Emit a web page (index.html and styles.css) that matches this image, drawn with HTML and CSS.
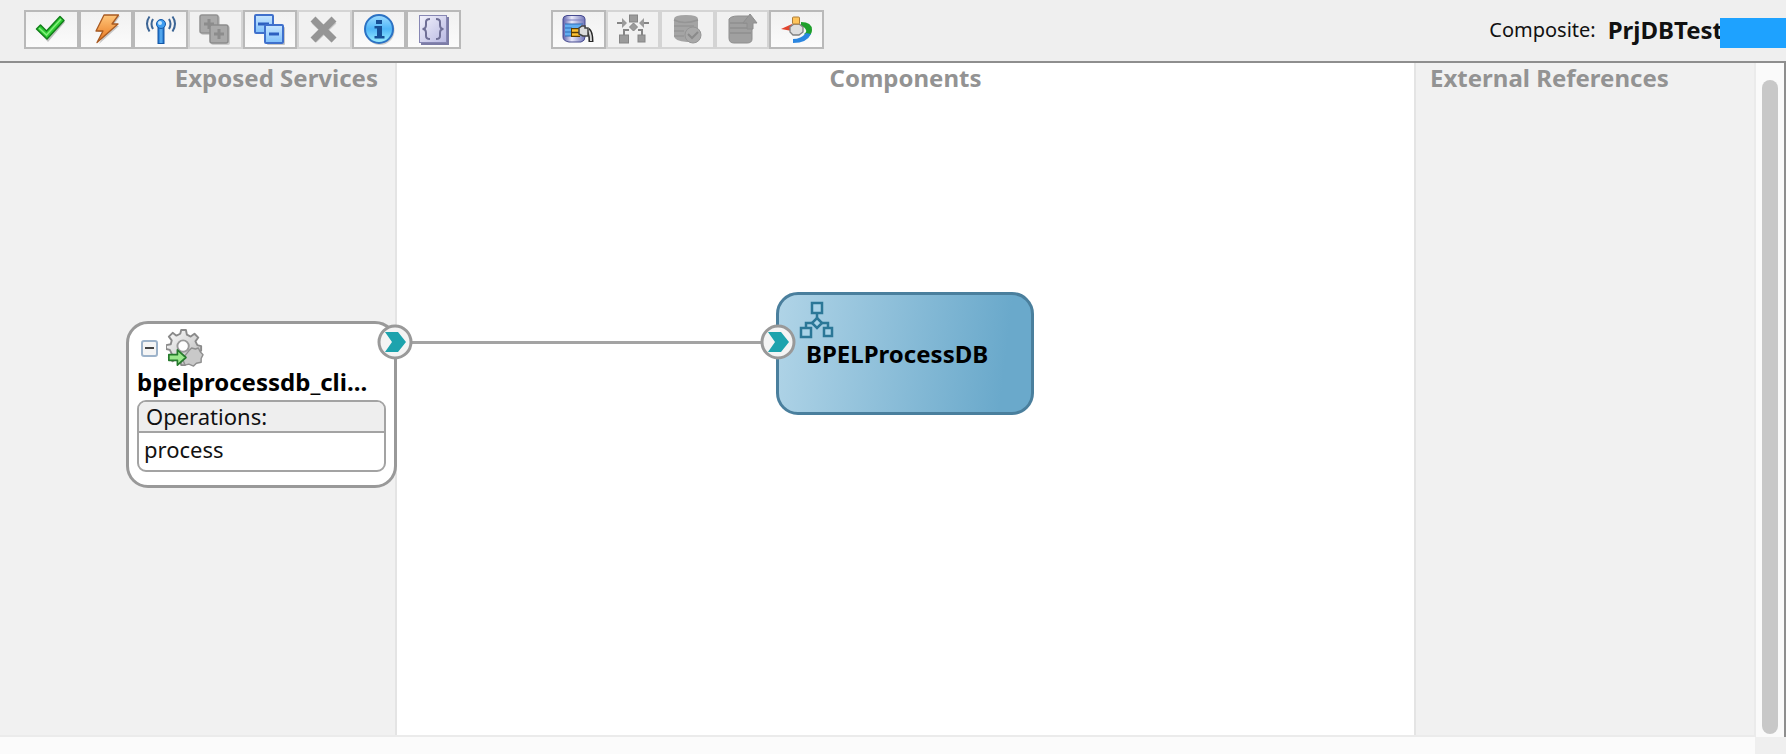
FILE: index.html
```
<!DOCTYPE html>
<html lang="en">

<head>
  <meta charset="utf-8" />
  <meta name="viewport" content="width=device-width, initial-scale=1" />
  <title>PrjDBTest</title>
  <link rel="stylesheet" href="styles.css">
</head>

<body>
  <!-- shared gradients -->
  <svg class="defs" width="0" height="0" aria-hidden="true">
    <defs>
      <linearGradient id="orange" x1="0" y1="0" x2="0" y2="1">
        <stop offset="0" stop-color="#ffc67a" /><stop offset="1" stop-color="#e8741c" />
      </linearGradient>
      <linearGradient id="blue" x1="0" y1="0" x2="0" y2="1">
        <stop offset="0" stop-color="#c8e6ff" /><stop offset="1" stop-color="#7fc0fb" />
      </linearGradient>
      <linearGradient id="pole" x1="0" y1="0" x2="1" y2="0">
        <stop offset="0" stop-color="#1668c4" /><stop offset=".5" stop-color="#5db2f5" /><stop offset="1" stop-color="#1263bd" />
      </linearGradient>
      <linearGradient id="violet" x1="0" y1="0" x2="1" y2="1">
        <stop offset="0" stop-color="#f2f2fc" /><stop offset="1" stop-color="#b9b9e2" />
      </linearGradient>
      <linearGradient id="barrel" x1="0" y1="0" x2="1" y2="0">
        <stop offset="0" stop-color="#5c5faa" /><stop offset=".4" stop-color="#e9e9fa" /><stop offset="1" stop-color="#7175b8" />
      </linearGradient>
      <linearGradient id="info" x1="0" y1="0" x2="0" y2="1">
        <stop offset="0" stop-color="#9edcff" /><stop offset=".5" stop-color="#4fb6f8" /><stop offset="1" stop-color="#9df0ff" />
      </linearGradient>
      <linearGradient id="metal" x1="0" y1="0" x2="1" y2="1">
        <stop offset="0" stop-color="#fdfdfd" /><stop offset="1" stop-color="#b5b5b5" />
      </linearGradient>
    </defs>
  </svg>

  <header class="toolbar">
    <div class="group group-main">
      <button type="button" aria-label="Validate">
        <svg viewBox="0 0 32 32">
          <path d="M3 17l4-4 5 6L26 4l4 4-17 20z" fill="#555" opacity=".35" />
          <path d="M1.500 15l4-4 6 6L25 2.500l4 4L12 25z" fill="#2fce35" stroke="#12801a" stroke-width="1.500" stroke-linejoin="round" />
          <path d="M4 14l7.500 7L26 5" fill="none" stroke="#84f07c" stroke-width="1.500" />
        </svg>
      </button>
      <button type="button" aria-label="Test">
        <svg viewBox="0 0 32 32">
          <path d="M16 2h14l-7 10h6L9 30l6-12H8z" fill="#555" opacity=".3" />
          <path d="M14 1h14.500L22 10h6L7 28.500 13 17H6z" fill="url(#orange)" stroke="#a85a22" stroke-width="1.300" stroke-linejoin="round" />
        </svg>
      </button>
      <button type="button" aria-label="Add service">
        <svg viewBox="0 0 32 32">
          <rect x="13" y="12" width="6" height="17.500" fill="url(#pole)" stroke="#1457a6" />
          <circle cx="16" cy="10" r="4.500" fill="#3f9df0" stroke="#1457a6" />
          <circle cx="15" cy="9" r="2" fill="#c4e7ff" />
          <g fill="none" stroke="#3c6595" stroke-width="2">
            <path d="M8 5q-3 5 0 10M4.500 2.500q-5 7 0 15M24 5q3 5 0 10M27.500 2.500q5 7 0 15" />
          </g>
        </svg>
      </button>
      <button type="button" aria-label="Expand all" disabled>
        <svg viewBox="0 0 32 32">
          <rect x="2" y="2" width="19" height="19" rx="2" fill="#ccc" />
          <rect x="1" y="1" width="18" height="18" rx="2" fill="#a9a9a9" stroke="#919191" stroke-width="1.500" />
          <path d="M5 10h10M10 5v10" stroke="#8c8c8c" stroke-width="3" />
          <rect x="12" y="12" width="19" height="19" rx="2" fill="#ccc" />
          <rect x="11" y="11" width="18" height="18" rx="2" fill="#a9a9a9" stroke="#8c8c8c" stroke-width="1.500" />
          <path d="M15 20h10M20 15v10" stroke="#8c8c8c" stroke-width="3" />
        </svg>
      </button>
      <button type="button" aria-label="Collapse all">
        <svg viewBox="0 0 32 32">
          <rect x="1" y="1" width="18" height="18" rx="1" fill="url(#blue)" stroke="#3f70cc" stroke-width="2" />
          <path d="M4 10h11" stroke="#2c5fc0" stroke-width="3" />
          <rect x="13" y="13" width="18" height="18" rx="1" fill="#777" opacity=".4" />
          <rect x="11" y="11" width="18" height="18" rx="1" fill="url(#blue)" stroke="#3f70cc" stroke-width="2" />
          <path d="M15 20h10" stroke="#2c5fc0" stroke-width="3" />
        </svg>
      </button>
      <button type="button" aria-label="Delete" disabled>
        <svg viewBox="0 0 32 32">
          <path d="M6 7l20 19M26 7L6 26" stroke="#ccc" stroke-width="7" />
          <path d="M5 5l21 21M26 5L5 26" stroke="#959595" stroke-width="7" />
        </svg>
      </button>
      <button type="button" aria-label="Information">
        <svg viewBox="0 0 32 32">
          <circle cx="17" cy="16.500" r="14.500" fill="#777" opacity=".35" />
          <circle cx="16" cy="15" r="14" fill="url(#info)" stroke="#2b72c4" stroke-width="2" />
          <path d="M13 6h6v4h-6zM11.500 12H19v10h2.500v2.500h-10V22H14v-7.500h-2.500z" fill="#164f96" />
        </svg>
      </button>
      <button type="button" aria-label="Source">
        <svg viewBox="0 0 32 32">
          <path d="M3 3h28v28H3z" fill="#7c7ca6" />
          <rect x="1.500" y="1.500" width="27" height="27" fill="url(#violet)" stroke="#8787b4" />
          <g fill="none" stroke="#6f6f96" stroke-width="2">
            <path d="M12 5q-4 0-4 3v3q0 4-3.500 4 3.500 0 3.500 4v3q0 3 4 3M18 5q4 0 4 3v3q0 4 3.500 4-3.500 0-3.500 4v3q0 3-4 3" />
          </g>
        </svg>
      </button>
    </div>

    <div class="group group-deploy">
      <button type="button" aria-label="Database adapter">
        <svg viewBox="0 0 32 32">
          <path d="M1 5q0-3 4-3.500h14q4 .5 4 3.500v18q0 4-4 5H7q-6-1-6-5z" fill="url(#barrel)" stroke="#464a90" />
          <path d="M2 6h20" stroke="#7a7ebf" />
          <path d="M3 10h16v12H3z" fill="#62aef0" />
          <path d="M3 10h18M3 14h7M3 18h7M3 22h7" stroke="#2d6bb5" />
          <path d="M9 14h9v9H9z" fill="#5b3d00" />
          <path d="M10 16.500h8M10 20.500h8" stroke="#ffc232" stroke-width="2.500" />
          <path d="M26 16q3 2 3 12" fill="none" stroke="#272727" stroke-width="5" />
          <path d="M24 15q5 1 5 12" fill="none" stroke="#d8d8d8" stroke-width="2" />
          <path d="M17 14l3-2h3v2h3v8h-5l-4-2z" fill="#dcdcdc" stroke="#444" stroke-width="1.500" />
        </svg>
      </button>
      <button type="button" aria-label="Mediator" disabled>
        <svg viewBox="0 0 32 32" fill="#9b9b9b" stroke="#858585">
          <path d="M0 9h6M32 9h-6" stroke-width="2" fill="none" />
          <path d="M5 4l5 5-5 5zM27 4l-5 5 5 5z" stroke="none" />
          <rect x="12.500" y="1" width="8" height="7" />
          <path d="M16.500 9l4 4-4 4-4-4z" />
          <path d="M12 16H7v5M21 16h4v5" fill="none" stroke-width="2" />
          <rect x="2.500" y="21" width="9" height="8" /><rect x="21" y="21" width="7" height="7" />
        </svg>
      </button>
      <button type="button" aria-label="Verify database" disabled>
        <svg viewBox="0 0 32 32">
          <path d="M3 5q0-4 12-4t12 4v19q-2 4-11 4Q3 27 3 22z" fill="#a4a4a4" />
          <path d="M3 6q10 5 24 0M3 12h20M3 17h10M3 22h10" stroke="#959595" stroke-width="1.500" fill="none" />
          <circle cx="22" cy="21" r="8" fill="#a8a8a8" stroke="#959595" />
          <path d="M17 20l4 4 6-6" fill="none" stroke="#8a8a8a" stroke-width="2" />
        </svg>
      </button>
      <button type="button" aria-label="Export database" disabled>
        <svg viewBox="0 0 32 32">
          <path d="M3 5q2-3 9-3h10l4 4v19q0 4-5 4H8q-5 0-5-5z" fill="#a0a0a0" stroke="#8f8f8f" />
          <path d="M4 9h17M4 14h21M4 19h21" stroke="#8f8f8f" stroke-width="1.500" />
          <path d="M24 0l7 9h-4v6h-6V9h-4z" fill="#999" stroke="#8e8e8e" />
        </svg>
      </button>
      <button type="button" aria-label="Sensors">
        <svg viewBox="0 0 32 32">
          <path d="M0 15l11-5v7z" fill="#e2452e" />
          <path d="M20 8q11 0 11 8 0 4-4 7l-4-3q3-2 2-4-1-3-5-4z" fill="#1fa02c" />
          <path d="M30 20q-4 9-18 9v-4q8 0 13-6z" fill="#2b86e0" />
          <path d="M9 13l4-3h5l4 3v5l-4 3h-6l-3-3z" fill="#dedede" stroke="#808080" stroke-width="1.300" />
          <rect x="11.500" y="3" width="7" height="7" rx="1" fill="#ffc45a" stroke="#ad7c39" />
        </svg>
      </button>
    </div>

    <div class="composite">
      <span class="composite-label">Composite:</span>
      <strong class="composite-name">PrjDBTest</strong>
      <span class="redacted"></span>
    </div>
  </header>

  <main class="editor">
    <div class="canvas">
      <section class="lane services"><h2>Exposed Services</h2></section>
      <section class="lane components"><h2>Components</h2></section>
      <section class="lane references"><h2>External References</h2></section>

      <div class="wire"></div>

      <article class="node service-node">
        <div class="node-icons">
          <button type="button" class="collapse" aria-label="Collapse"></button>
          <svg class="gear" viewBox="0 0 40 40">
            <path d="M16 1h5l1 5 4 2 4-3 4 4-3 4 2 4 4 1v5l-5 1-2 4 3 4-4 3-4-2-4 1-1 4h-4l-1-5-4-2-4 3-4-4 3-4-2-4-4-1v-4l5-1 1-4-3-4 4-4 4 3 4-2z" fill="url(#metal)" stroke="#8a8a8a" stroke-width="2" stroke-linejoin="round" />
            <circle cx="18" cy="18" r="6" fill="#fff" stroke="#9a9a9a" stroke-width="2" />
            <path d="M24 23l3-3 4 1 3-1 2 4 3 3-2 4v4l-5 1-3 3-5-2-4 1-2-5 2-5z" fill="#c9c9c9" stroke="#8f8f8f" stroke-width="1.500" stroke-linejoin="round" />
            <path d="M3 27h9v-5l9 8-9 8v-5H3z" fill="#9be88d" stroke="#257a2c" stroke-width="1.800" stroke-linejoin="round" />
          </svg>
        </div>
        <h3>bpelprocessdb_cli...</h3>
        <div class="operations">
          <div class="operations-title">Operations:</div>
          <div class="operation">process</div>
        </div>
      </article>

      <article class="node bpel-node">
        <svg class="bpel-icon" viewBox="0 0 36 38" fill="#a9d3e8" stroke="#2b7797" stroke-width="2.500">
          <rect x="13" y="2" width="10" height="10" />
          <path d="M18 12v5M13 22H7v5M23 22h6v5" fill="none" />
          <path d="M18 17l5 5-5 5-5-5z" />
          <rect x="2" y="27" width="10" height="9" /><rect x="25" y="27" width="8" height="8" />
        </svg>
        <h3>BPELProcessDB</h3>
      </article>

      <svg class="port port-service" viewBox="0 0 36 36">
        <circle cx="18" cy="18" r="16" fill="#f4f4f4" stroke="#999" stroke-width="3" />
        <path d="M8 8h13l8 10-8 10H8l7-10z" fill="#1da3ad" />
      </svg>
      <svg class="port port-bpel" viewBox="0 0 36 36">
        <circle cx="18" cy="18" r="16" fill="#f4f4f4" stroke="#999" stroke-width="3" />
        <path d="M8 8h13l8 10-8 10H8l7-10z" fill="#1da3ad" />
      </svg>
    </div>
    <div class="scrollbar"><div class="thumb"></div></div>
  </main>

  <footer class="bottom-bar"><div class="corner"></div></footer>
</body>

</html>
```
FILE: styles.css
```
html,
body {
  margin: 0;
  padding: 0;
}

body {
  display: flex;
  flex-direction: column;
  min-height: 100vh;
  font-family: "Noto Sans", "Open Sans", sans-serif;
  font-size: 20px;
  color: #111;
  background-color: #fbfbfb;
}

h2,
h3 {
  margin: 0;
}

.defs {
  position: absolute;
}

/* toolbar */
.toolbar {
  display: flex;
  align-items: center;
  box-sizing: border-box;
  height: 63px;
  padding: 0 0 2px 24px;
  background-color: #efefef;
  border-bottom: 2px solid #8e8e8e;
}

.group {
  display: flex;
}

.group-main {
  width: 437px;
  margin-right: 90px;
}

.group-deploy {
  width: 273px;
}

.group button {
  display: flex;
  flex: 1;
  align-items: center;
  justify-content: center;
  height: 39px;
  padding: 0;
  border: 2px solid #b9b9b9;
  background: linear-gradient(#f1f1f1, #fbfbfb);
}

.group button:disabled {
  border-color: #d4d4d4;
  background: #f1f1f1;
}

.group svg {
  width: 32px;
  height: 32px;
}

.composite {
  display: flex;
  align-items: center;
  margin-left: auto;
}

.composite-label {
  margin-right: 12px;
  font-size: 20px;
  line-height: 30px;
}

.composite-name {
  font-size: 24px;
  line-height: 30px;
}

.redacted {
  position: relative;
  width: 66px;
  height: 30px;
  margin-left: -3px;
  margin-top: 6px;
  background-color: #1ea2ff;
}

/* editor */
.editor {
  display: flex;
  flex: 1;
  border-right: 2px solid #8e8e8e;
}

.canvas {
  position: relative;
  display: grid;
  flex: 1;
  grid-template-columns: 397px 1fr 340px;
  border-right: 2px solid #ebebeb;
  border-bottom: 2px solid #ebebeb;
}

.lane {
  box-sizing: border-box;
  background-color: #f1f1f1;
}

.lane h2 {
  font-size: 24px;
  line-height: 30px;
  color: #939393;
}

.services {
  padding-right: 17px;
  text-align: right;
  border-right: 2px solid #e4e4e4;
}

.components {
  text-align: center;
  background-color: #fff;
}

.references {
  padding-left: 14px;
  border-left: 2px solid #e4e4e4;
}

.scrollbar {
  display: flex;
  width: 28px;
  padding: 17px 0 3px;
  box-sizing: border-box;
  justify-content: center;
  background-color: #fafafa;
}

.thumb {
  width: 16px;
  border-radius: 8px;
  background-color: #c8c8c8;
}

.bottom-bar {
  display: flex;
  justify-content: flex-end;
  height: 17px;
}

.corner {
  width: 31px;
  background-color: #efefef;
}

/* diagram */
.node {
  position: absolute;
  box-sizing: border-box;
  border-radius: 22px;
}

.node h3 {
  font-size: 24px;
  line-height: 30px;
  color: #000;
}

.service-node {
  left: 126px;
  top: 258px;
  width: 271px;
  height: 167px;
  padding: 5px 8px;
  border: 3px solid #999;
  background-color: #fff;
}

.node-icons {
  display: flex;
  align-items: center;
  gap: 8px;
  height: 38px;
  padding-left: 4px;
}

.gear {
  width: 38px;
  height: 38px;
}

.collapse {
  width: 17px;
  height: 17px;
  padding: 0;
  border: 2px solid #9db3ca;
  border-radius: 3px;
  background: linear-gradient(#444, #444) center / 9px 2px no-repeat #f5f5f5;
}

.operations {
  margin-top: 3px;
  overflow: hidden;
  border: 2px solid #a3a3a3;
  border-radius: 9px;
}

.operations-title {
  padding-left: 7px;
  line-height: 29px;
  font-size: 22px;
  background-color: #eee;
  border-bottom: 2px solid #a3a3a3;
}

.operation {
  height: 37px;
  padding-left: 5px;
  line-height: 32px;
  font-size: 22px;
}

.bpel-node {
  left: 776px;
  top: 229px;
  width: 258px;
  height: 123px;
  padding: 6px 20px;
  border: 3px solid #4a7f9d;
  background: linear-gradient(97deg, #b0d4e7, #6aa9cb 88%);
}

.bpel-icon {
  display: block;
  width: 36px;
  height: 38px;
}

.bpel-node h3 {
  padding-left: 7px;
}

.wire {
  position: absolute;
  left: 412px;
  top: 278px;
  width: 350px;
  height: 3px;
  background-color: #a3a3a3;
}

.port {
  position: absolute;
  top: 261px;
  width: 36px;
  height: 36px;
}

.port-service {
  left: 377px;
}

.port-bpel {
  left: 760px;
}
```
